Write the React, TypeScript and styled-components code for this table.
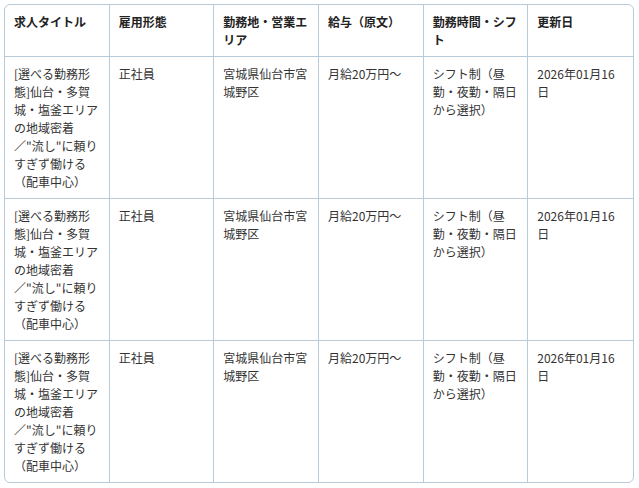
import React from 'react';
import styled, { createGlobalStyle } from 'styled-components';

const GlobalStyle = createGlobalStyle`
  body {
    margin: 0;
    background: #fff;
    font-family: "Noto Sans CJK JP", "Noto Sans", sans-serif;
  }
`;

const Wrapper = styled.div`
  padding: 4px 5px 4px 4px;
`;

const Table = styled.table`
  width: 100%;
  table-layout: fixed;
  border-collapse: separate;
  border-spacing: 0;
  border: 1px solid #b9cad8;
  border-radius: 6px;
  font-size: 12px;
  line-height: 18px;
  color: #333;
`;

const Th = styled.th<{ $last?: boolean }>`
  text-align: left;
  vertical-align: top;
  font-weight: 700;
  color: #222;
  padding: 8px 9px 7px;
  border-right: ${(p) => (p.$last ? 'none' : '1px solid #b9cad8')};
  border-bottom: 1px solid #b9cad8;
`;

const Td = styled.td<{ $last?: boolean; $bottom?: boolean }>`
  vertical-align: top;
  padding: 8px 9px 7px;
  border-right: ${(p) => (p.$last ? 'none' : '1px solid #b9cad8')};
  border-bottom: ${(p) => (p.$bottom ? 'none' : '1px solid #b9cad8')};
  word-break: break-all;
`;

const headers = ['求人タイトル', '雇用形態', '勤務地・営業エリア', '給与（原文）', '勤務時間・シフト', '更新日'];

const row = [
  '[選べる勤務形態]仙台・多賀城・塩釜エリアの地域密着／"流し"に頼りすぎず働ける（配車中心）',
  '正社員',
  '宮城県仙台市宮城野区',
  '月給20万円〜',
  'シフト制（昼勤・夜勤・隔日から選択）',
  '2026年01月16日',
];

const rows = [row, row, row];

export default function App() {
  return (
    <Wrapper>
      <GlobalStyle />
      <Table>
        <thead>
          <tr>
            {headers.map((h, i) => (
              <Th key={h} $last={i === headers.length - 1}>{h}</Th>
            ))}
          </tr>
        </thead>
        <tbody>
          {rows.map((r, ri) => (
            <tr key={ri}>
              {r.map((c, ci) => (
                <Td key={ci} $last={ci === r.length - 1} $bottom={ri === rows.length - 1}>
                  {c}
                </Td>
              ))}
            </tr>
          ))}
        </tbody>
      </Table>
    </Wrapper>
  );
}
